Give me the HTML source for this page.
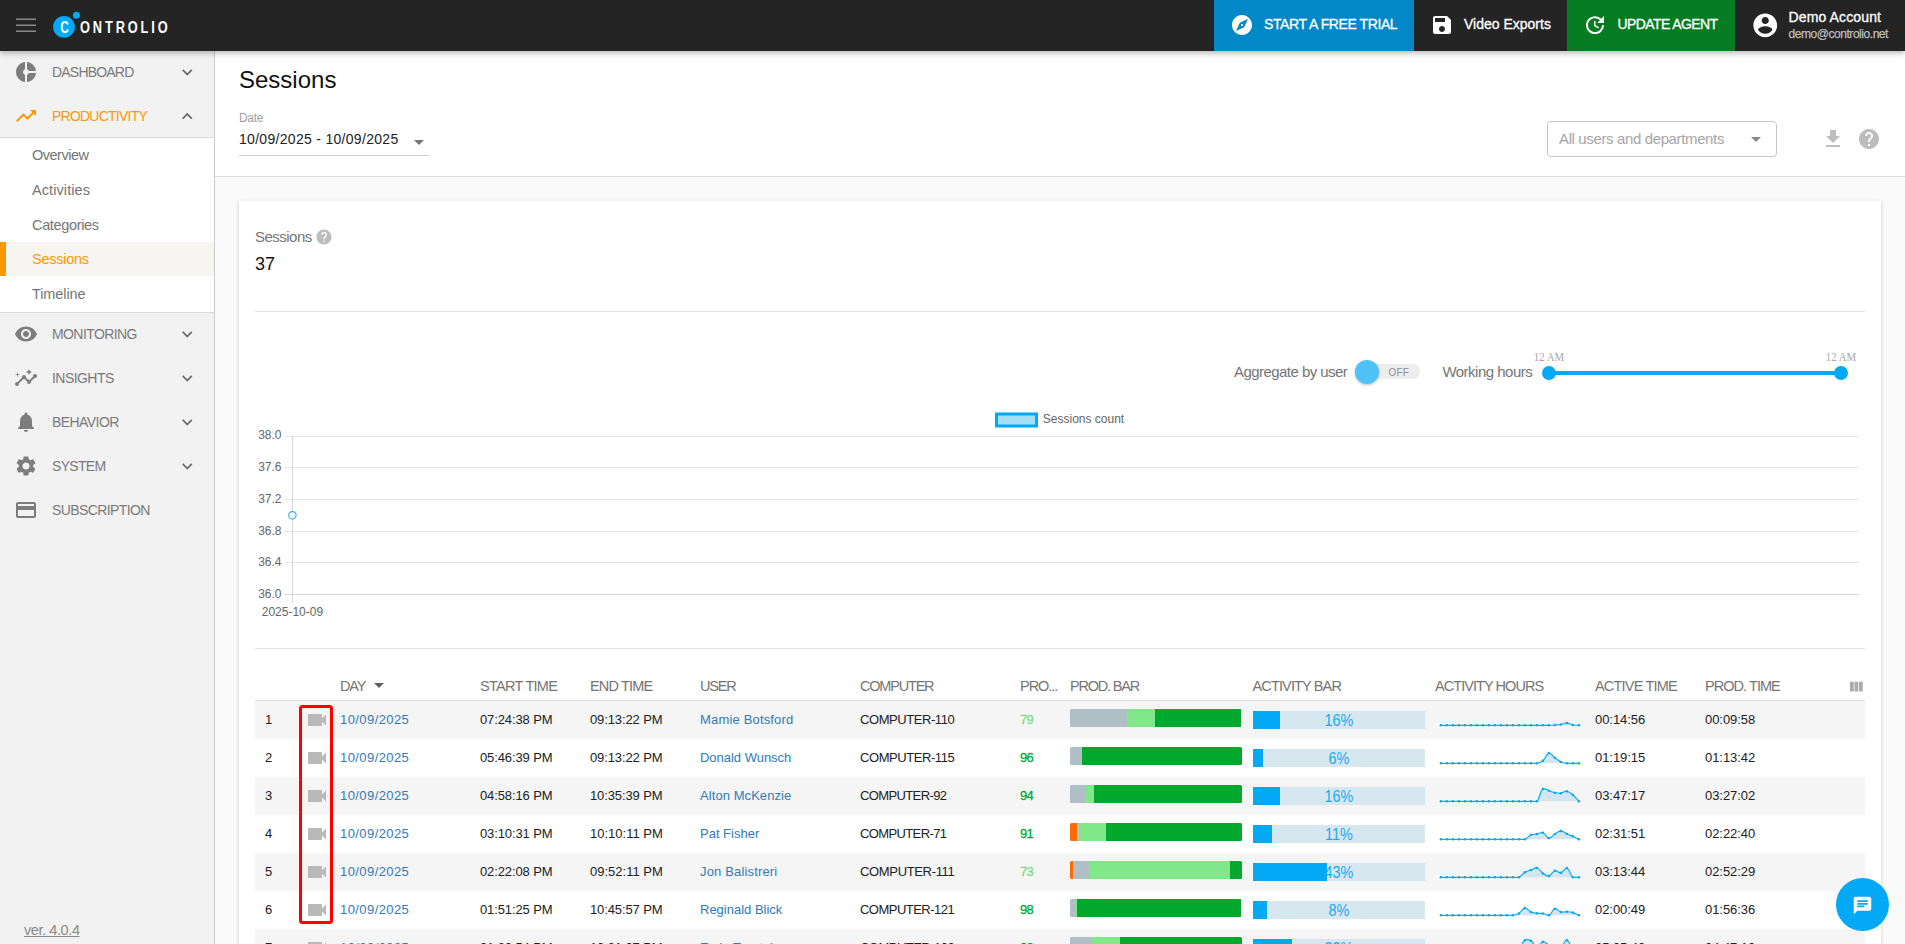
<!DOCTYPE html>
<html lang="en">
<head>
<meta charset="utf-8">
<title>Sessions</title>
<style>
*{box-sizing:border-box;margin:0;padding:0}
html,body{width:1905px;height:944px;overflow:hidden;background:#fafafa;font-family:"Liberation Sans",sans-serif;color:#212121}
svg{display:block}
.abs{position:absolute}
/* header */
#hdr{position:absolute;left:0;top:0;width:1905px;height:51px;background:#242424;z-index:10;box-shadow:0 2px 6px rgba(0,0,0,.3)}
#hdr .t{position:absolute;color:#fff;white-space:nowrap}
/* sidebar */
#side{position:absolute;left:0;top:50px;width:215px;height:894px;background:#f2f2f2;border-right:1px solid #cbcbcb;z-index:5}
.nav{position:absolute;left:0;width:214px;height:44px}
.nav svg.ic{position:absolute;left:14px;top:10px;width:24px;height:24px;fill:#7d7d7d}
.nav svg.ch{position:absolute;left:177.300px;top:11.600px;width:20.500px;height:20.500px;fill:#6b6b6b}
.nav span{position:absolute;left:52px;top:0;line-height:44px;font-size:14px;color:#7a7a7a;white-space:nowrap}
.sub{position:absolute;left:0;top:87px;width:214px;height:176px;background:#fff;border-top:1px solid #dcdcdc;border-bottom:1px solid #dcdcdc}
.sub div{position:absolute;left:0;width:214px;height:35px;line-height:35px;padding-left:32px;font-size:14.5px;color:#757575}
/* main */
#top{position:absolute;left:215px;top:50px;width:1690px;height:127px;background:#fff;border-bottom:1px solid #dcdcdc}
#card{position:absolute;left:239px;top:201px;width:1642px;height:800px;background:#fff;box-shadow:0 1px 4px rgba(0,0,0,.18);border-radius:2px}
.nav.on svg.ic{fill:#ff9800}
.nav.on span{color:#ff9800}
.sub div.cur{background:#f7f5f2;color:#ff9800;border-left:6px solid #ff9800;padding-left:26px}
.th{position:absolute;font-size:14.500px;line-height:20px;color:#757575;white-space:nowrap}
.tr{position:absolute;left:16px;width:1610px;height:38px;background:#fff}
.tr.odd{background:#f5f5f5}
.td{position:absolute;top:0;line-height:37px;font-size:13px;color:#212121;white-space:nowrap}
.td.lk{color:#337ab7}
.td.hi{color:#00a82d}
.td.lo{color:#7fdc86}
.pb{position:absolute;top:8px;width:171.600px;height:17.500px;display:flex;overflow:hidden;border-radius:1.500px}
.pb i{display:block;height:100%;flex:none}
.ab{position:absolute;top:10px;width:172px;height:18px;background:#d7e7ef}
.ab i{position:absolute;left:0;top:0;height:100%;background:#03a9f4}
.ab b{position:absolute;left:0;top:0;width:100%;text-align:center;font-weight:normal;font-size:16px;line-height:19px;color:#22a9ee;transform:scaleX(.9)}
#h1,#h2,#h3,#h4{-webkit-text-stroke:.3px #fff}
#h5{-webkit-text-stroke:.25px #bdbdbd}
.td.hi,.td.lo{-webkit-text-stroke:.3px currentColor}
#n1{letter-spacing:-0.80px}
#n2{letter-spacing:-0.77px}
#n3{letter-spacing:-0.59px}
#n4{letter-spacing:-0.55px}
#n5{letter-spacing:-0.56px}
#n6{letter-spacing:-0.68px}
#n7{letter-spacing:-0.60px}
#s1{letter-spacing:-0.49px}
#s2{letter-spacing:0.09px}
#s3{letter-spacing:-0.34px}
#s4{letter-spacing:-0.26px}
#s5{letter-spacing:-0.10px}
#ver{letter-spacing:-0.41px}
#h1{letter-spacing:-0.41px}
#h3{letter-spacing:-0.60px}
#h4{letter-spacing:0.13px}
#h5{letter-spacing:-0.45px}
#dl{letter-spacing:-0.32px}
#dv{letter-spacing:0.30px}
#sel{letter-spacing:-0.37px}
#c1{letter-spacing:-0.52px}
#c2{letter-spacing:-0.03px}
#c3{letter-spacing:-0.55px}
#c4{letter-spacing:0.20px}
#c5{letter-spacing:-0.51px}
#th0{letter-spacing:-1.20px}
#th1{letter-spacing:-0.72px}
#th2{letter-spacing:-0.83px}
#th3{letter-spacing:-1.20px}
#th4{letter-spacing:-1.20px}
#th5{letter-spacing:-1.04px}
#th6{letter-spacing:-1.20px}
#th7{letter-spacing:-0.86px}
#th8{letter-spacing:-0.94px}
#th9{letter-spacing:-0.81px}
#th10{letter-spacing:-0.95px}
#t1_1{letter-spacing:0.42px}
#t1_2{letter-spacing:-0.11px}
#t1_3{letter-spacing:-0.11px}
#t1_4{letter-spacing:0.17px}
#t1_5{letter-spacing:-0.43px}
#t1_6{letter-spacing:-0.67px}
#t1_7{letter-spacing:-0.06px}
#t1_8{letter-spacing:-0.06px}
#t2_1{letter-spacing:0.42px}
#t2_2{letter-spacing:-0.11px}
#t2_3{letter-spacing:-0.11px}
#t2_4{letter-spacing:-0.02px}
#t2_5{letter-spacing:-0.43px}
#t2_6{letter-spacing:-0.67px}
#t2_7{letter-spacing:-0.06px}
#t2_8{letter-spacing:-0.06px}
#t3_1{letter-spacing:0.42px}
#t3_2{letter-spacing:-0.11px}
#t3_3{letter-spacing:-0.11px}
#t3_4{letter-spacing:0.07px}
#t3_5{letter-spacing:-0.62px}
#t3_6{letter-spacing:-0.67px}
#t3_7{letter-spacing:-0.06px}
#t3_8{letter-spacing:-0.06px}
#t4_1{letter-spacing:0.42px}
#t4_2{letter-spacing:-0.11px}
#t4_5{letter-spacing:-0.62px}
#t4_6{letter-spacing:-0.67px}
#t4_7{letter-spacing:-0.06px}
#t4_8{letter-spacing:-0.06px}
#t5_1{letter-spacing:0.42px}
#t5_2{letter-spacing:-0.11px}
#t5_4{letter-spacing:0.16px}
#t5_5{letter-spacing:-0.34px}
#t5_6{letter-spacing:-0.67px}
#t5_7{letter-spacing:-0.06px}
#t5_8{letter-spacing:-0.06px}
#t6_1{letter-spacing:0.42px}
#t6_2{letter-spacing:-0.11px}
#t6_3{letter-spacing:-0.11px}
#t6_5{letter-spacing:-0.52px}
#t6_6{letter-spacing:-0.67px}
#t6_7{letter-spacing:-0.06px}
#t6_8{letter-spacing:-0.06px}
#t7_1{letter-spacing:0.42px}
#t7_2{letter-spacing:-0.11px}
#t7_3{letter-spacing:-0.11px}
#t7_5{letter-spacing:-0.52px}
#t7_6{letter-spacing:-0.67px}
#t7_7{letter-spacing:-0.06px}
#t7_8{letter-spacing:-0.06px}
</style>
</head>
<body>
<div id="hdr">
<svg class="abs" style="left:14px;top:13px;width:24px;height:24px" viewBox="0 0 24 24"><path fill="#8a8a8a" d="M2 17.5h20V19H2zm0-6h20V13H2zm0-6h20V7H2z"/></svg>
<svg class="abs" style="left:50px;top:8px;width:34px;height:34px" viewBox="0 0 34 34"><circle cx="14" cy="18.900" r="10.900" fill="#03a9f4"/><circle cx="26.400" cy="7.300" r="3.500" fill="#03a9f4"/><text transform="translate(14.400 24.600) scale(.74 1)" text-anchor="middle" font-family="Liberation Sans, sans-serif" font-size="16" font-weight="bold" fill="#fff">C</text></svg>
<div class="t" id="logo" style="left:79.800px;top:17px;font-size:16px;line-height:22px;font-weight:bold;transform:scaleX(.8);transform-origin:0 0;letter-spacing:3.600px">ONTROLIO</div>
<div class="abs" style="left:1214px;top:0;width:200px;height:51px;background:#0288c8"></div>
<svg class="abs" style="left:1230px;top:12.5px;width:24px;height:24px" viewBox="0 0 24 24"><path fill="#fff" d="M12 10.9c-.61 0-1.1.49-1.1 1.1s.49 1.1 1.1 1.1c.61 0 1.1-.49 1.1-1.1s-.49-1.1-1.1-1.1zM12 2C6.48 2 2 6.48 2 12s4.480 10 10 10 10-4.480 10-10S17.52 2 12 2zm2.190 12.190L6 18l3.810-8.190L18 6l-3.810 8.190z"/></svg>
<div class="t" id="h1" style="left:1264px;top:13px;font-size:14px;line-height:22px">START A FREE TRIAL</div>
<svg class="abs" style="left:1430px;top:12.500px;width:24px;height:24px" viewBox="0 0 24 24"><path fill="#fff" d="M17 3H5c-1.110 0-2 .9-2 2v14c0 1.100.890 2 2 2h14c1.100 0 2-.9 2-2V7l-4-4zm-5 16c-1.660 0-3-1.340-3-3s1.340-3 3-3 3 1.340 3 3-1.340 3-3 3zm3-10H5V5h10v4z"/></svg>
<div class="t" id="h2" style="left:1464px;top:13px;font-size:14px;line-height:22px">Video Exports</div>
<div class="abs" style="left:1567px;top:0;width:168px;height:51px;background:#067c22"></div>
<svg class="abs" style="left:1583px;top:12.500px;width:24px;height:24px" viewBox="0 0 24 24"><path fill="#fff" d="M21 10.120h-6.780l2.740-2.820c-2.730-2.700-7.150-2.800-9.880-.1-2.730 2.710-2.730 7.080 0 9.790s7.150 2.710 9.880 0C18.320 15.650 19 14.080 19 12.100h2c0 1.980-.88 4.550-2.640 6.290-3.510 3.480-9.210 3.480-12.720 0-3.500-3.470-3.530-9.110-.02-12.580s9.140-3.470 12.650 0L21 3v7.120zM12.500 8v4.250l3.500 2.080-.72 1.210L11 13V8h1.500z"/></svg>
<div class="t" id="h3" style="left:1617.500px;top:13px;font-size:14px;line-height:22px">UPDATE AGENT</div>
<svg class="abs" style="left:1750.500px;top:10.500px;width:28.500px;height:28.500px" viewBox="0 0 24 24"><path fill="#fff" d="M12 2C6.480 2 2 6.480 2 12s4.480 10 10 10 10-4.480 10-10S17.520 2 12 2zm0 3c1.660 0 3 1.340 3 3s-1.340 3-3 3-3-1.340-3-3 1.340-3 3-3zm0 14.200c-2.500 0-4.710-1.280-6-3.220.03-1.990 4-3.080 6-3.080 1.990 0 5.970 1.090 6 3.080-1.290 1.940-3.500 3.220-6 3.220z"/></svg>
<div class="t" id="h4" style="left:1788.500px;top:7px;font-size:14px;line-height:20px">Demo Account</div>
<div class="t" id="h5" style="left:1788.500px;top:24.500px;font-size:12px;line-height:18px;color:#bdbdbd">demo@controlio.net</div>
</div>
<div id="side">
<div class="nav " style="top:0px"><svg class="ic" viewBox="0 0 24 24"><path d="M11 9.16V2c-5 .5-9 4.79-9 10s4 9.5 9 10v-7.16c-1-.41-2-1.52-2-2.84s1-2.430 2-2.840zM14.860 11H22c-.48-4.75-4-8.53-9-9v7.160c1 .3 1.520.980 1.860 1.840zM13 14.840V22c5-.47 8.520-4.250 9-9h-7.140c-.34.860-.86 1.540-1.860 1.840z"/></svg><span id="n1">DASHBOARD</span><svg class="ch" viewBox="0 0 24 24"><path d="M16.590 8.590L12 13.170 7.410 8.590 6 10l6 6 6-6z"/></svg></div>
<div class="nav on" style="top:44px"><svg class="ic" viewBox="0 0 24 24"><path d="M16 6l2.290 2.290-4.880 4.880-4-4L2 16.590 3.410 18l6-6 4 4 6.300-6.290L22 12V6z"/></svg><span id="n2">PRODUCTIVITY</span><svg class="ch" viewBox="0 0 24 24"><path d="M12 8l-6 6 1.410 1.410L12 10.830l4.590 4.580L18 14z"/></svg></div>
<div class="sub">
<div style="top:-.3px"><span id="s1">Overview</span></div>
<div style="top:34.500px"><span id="s2">Activities</span></div>
<div style="top:69.500px"><span id="s3">Categories</span></div>
<div class="cur" style="top:104px;height:33.700px;line-height:35.400px"><span id="s4">Sessions</span></div>
<div style="top:138.800px"><span id="s5">Timeline</span></div>
</div>
<div class="nav " style="top:262px"><svg class="ic" viewBox="0 0 24 24"><path d="M12 4.500C7 4.500 2.730 7.610 1 12c1.730 4.390 6 7.500 11 7.500s9.270-3.110 11-7.500c-1.730-4.390-6-7.500-11-7.500zM12 17c-2.760 0-5-2.240-5-5s2.240-5 5-5 5 2.240 5 5-2.240 5-5 5zm0-8c-1.660 0-3 1.340-3 3s1.340 3 3 3 3-1.340 3-3-1.340-3-3-3z"/></svg><span id="n3">MONITORING</span><svg class="ch" viewBox="0 0 24 24"><path d="M16.590 8.590L12 13.170 7.410 8.590 6 10l6 6 6-6z"/></svg></div>
<div class="nav " style="top:306px"><svg class="ic" viewBox="0 0 24 24"><path d="M21 8c-1.450 0-2.260 1.440-1.930 2.510l-3.550 3.560c-.3-.09-.74-.09-1.040 0l-2.550-2.550C12.270 10.450 11.460 9 10 9c-1.450 0-2.270 1.440-1.930 2.520l-4.560 4.550C2.440 15.740 1 16.550 1 18c0 1.100.9 2 2 2 1.450 0 2.260-1.440 1.930-2.510l4.550-4.560c.3.090.74.090 1.040 0l2.550 2.550C12.730 16.550 13.540 18 15 18c1.450 0 2.270-1.440 1.930-2.520l3.560-3.550c1.070.33 2.510-.48 2.510-1.930 0-1.100-.9-2-2-2z M15 9l.94-2.070L18 6l-2.060-.93L15 3l-.92 2.070L12 6l2.080.93z M3.500 11L4 9l2-.5L4 8l-.5-2L3 8l-2 .5L3 9z"/></svg><span id="n4">INSIGHTS</span><svg class="ch" viewBox="0 0 24 24"><path d="M16.590 8.590L12 13.170 7.410 8.590 6 10l6 6 6-6z"/></svg></div>
<div class="nav " style="top:350px"><svg class="ic" viewBox="0 0 24 24"><path d="M12 22c1.100 0 2-.9 2-2h-4c0 1.100.890 2 2 2zm6-6v-5c0-3.070-1.640-5.640-4.500-6.320V4c0-.83-.67-1.500-1.500-1.500s-1.500.67-1.500 1.500v.68C7.630 5.360 6 7.920 6 11v5l-2 2v1h16v-1l-2-2z"/></svg><span id="n5">BEHAVIOR</span><svg class="ch" viewBox="0 0 24 24"><path d="M16.590 8.590L12 13.170 7.410 8.590 6 10l6 6 6-6z"/></svg></div>
<div class="nav " style="top:394px"><svg class="ic" viewBox="0 0 24 24"><path d="M19.140 12.940c.04-.3.060-.61.060-.94 0-.32-.02-.64-.07-.94l2.030-1.580c.18-.14.23-.41.12-.61l-1.920-3.320c-.12-.22-.37-.29-.59-.22l-2.390.96c-.5-.38-1.030-.7-1.620-.94l-.36-2.540c-.04-.24-.24-.41-.48-.41h-3.840c-.24 0-.43.17-.47.41l-.36 2.540c-.59.24-1.130.57-1.620.94l-2.390-.96c-.22-.08-.47 0-.59.22L2.740 8.870c-.12.21-.08.47.12.61l2.030 1.580c-.05.3-.09.63-.09.94s.02.64.07.94l-2.030 1.580c-.18.14-.23.41-.12.61l1.920 3.320c.12.22.37.29.59.22l2.390-.96c.5.38 1.030.7 1.620.94l.36 2.540c.05.24.24.41.48.41h3.840c.24 0 .44-.17.47-.41l.36-2.540c.59-.24 1.130-.56 1.620-.94l2.390.96c.22.08.47 0 .59-.22l1.920-3.320c.12-.22.07-.47-.12-.61l-2.010-1.580zM12 15.600c-1.980 0-3.600-1.620-3.600-3.600s1.620-3.600 3.600-3.600 3.600 1.620 3.600 3.600-1.620 3.600-3.600 3.600z"/></svg><span id="n6">SYSTEM</span><svg class="ch" viewBox="0 0 24 24"><path d="M16.590 8.590L12 13.170 7.410 8.590 6 10l6 6 6-6z"/></svg></div>
<div class="nav " style="top:438px"><svg class="ic" viewBox="0 0 24 24"><path d="M20 4H4c-1.110 0-1.990.890-1.990 2L2 18c0 1.110.890 2 2 2h16c1.110 0 2-.89 2-2V6c0-1.110-.89-2-2-2zm0 14H4v-6h16v6zm0-10H4V6h16v2z"/></svg><span id="n7">SUBSCRIPTION</span></div>
<div class="abs" id="ver" style="left:24px;top:870px;font-size:14.500px;line-height:20px;color:#8a8a8a;text-decoration:underline">ver. 4.0.4</div>
</div>
<div id="top">
<div class="abs" id="ttl" style="left:24px;top:14px;font-size:24px;line-height:32px;color:#111">Sessions</div>
<div class="abs" id="dl" style="left:24px;top:60px;font-size:12px;line-height:16px;color:#9e9e9e">Date</div>
<div class="abs" id="dv" style="left:24px;top:79px;font-size:14px;line-height:20px;color:#212121;white-space:nowrap">10/09/2025 - 10/09/2025</div>
<svg class="abs" style="left:192px;top:80px;width:24px;height:24px" viewBox="0 0 24 24"><path fill="#757575" d="M7 10l5 5 5-5z"/></svg>
<div class="abs" style="left:24px;top:105px;width:190px;height:1px;background:#cfcfcf"></div>
<div class="abs" style="left:1332px;top:71px;width:230px;height:36px;border:1px solid #c8c8c8;border-radius:4px;background:#fff"></div>
<div class="abs" id="sel" style="left:1344px;top:79px;font-size:15px;line-height:20px;color:#a6a6a6;white-space:nowrap">All users and departments</div>
<svg class="abs" style="left:1529px;top:77px;width:24px;height:24px" viewBox="0 0 24 24"><path fill="#878787" d="M7 10l5 5 5-5z"/></svg>
<svg class="abs" style="left:1606px;top:77px;width:24px;height:24px" viewBox="0 0 24 24"><path fill="#bdbdbd" d="M19 9h-4V3H9v6H5l7 7 7-7zM5 18v2h14v-2H5z"/></svg>
<svg class="abs" style="left:1642px;top:77px;width:24px;height:24px" viewBox="0 0 24 24"><path fill="#bdbdbd" d="M12 2C6.480 2 2 6.480 2 12s4.480 10 10 10 10-4.480 10-10S17.520 2 12 2zm1 17h-2v-2h2v2zm2.070-7.750l-.9.920C13.450 12.900 13 13.500 13 15h-2v-.5c0-1.100.450-2.100 1.170-2.830l1.240-1.260c.370-.36.590-.86.590-1.410 0-1.100-.9-2-2-2s-2 .9-2 2H8c0-2.210 1.790-4 4-4s4 1.790 4 4c0 .880-.36 1.680-.93 2.250z"/></svg>
</div>
<div id="card">
<div class="abs" id="c1" style="left:16px;top:26px;font-size:15px;line-height:20px;color:#757575">Sessions</div>
<svg class="abs" style="left:76px;top:27px;width:18px;height:18px" viewBox="0 0 24 24"><path fill="#bdbdbd" d="M12 2C6.480 2 2 6.480 2 12s4.480 10 10 10 10-4.480 10-10S17.520 2 12 2zm1 17h-2v-2h2v2zm2.070-7.750l-.9.920C13.450 12.900 13 13.500 13 15h-2v-.5c0-1.100.450-2.100 1.170-2.830l1.240-1.260c.370-.36.590-.86.590-1.410 0-1.100-.9-2-2-2s-2 .9-2 2H8c0-2.210 1.790-4 4-4s4 1.790 4 4c0 .880-.36 1.680-.93 2.250z"/></svg>
<div class="abs" id="c2" style="left:16px;top:50.5px;font-size:18px;line-height:24px;color:#111">37</div>
<div class="abs" style="left:16px;top:110px;width:1610px;height:1px;background:#e0e0e0"></div>
<div class="abs" id="c3" style="left:995px;top:161px;font-size:15px;line-height:20px;color:#757575;white-space:nowrap">Aggregate by user</div>
<div class="abs" style="left:1123px;top:163px;width:58px;height:15px;border-radius:7.500px;background:#ededed"></div>
<div class="abs" id="c4" style="left:1149.500px;top:165px;font-size:10px;line-height:14px;color:#8f8f8f">OFF</div>
<div class="abs" style="left:1115.8px;top:158.7px;width:24.400px;height:24.400px;border-radius:50%;background:#4fc3f7;box-shadow:0 1px 3px rgba(0,0,0,.25)"></div>
<div class="abs" id="c5" style="left:1203.4px;top:161px;font-size:15px;line-height:20px;color:#757575;white-space:nowrap">Working hours</div>
<div class="abs" style="left:1310px;top:170.200px;width:292px;height:3.500px;background:#03a9f4"></div>
<div class="abs" style="left:1303px;top:165px;width:14px;height:14px;border-radius:50%;background:#03a9f4"></div>
<div class="abs" style="left:1595px;top:165px;width:14px;height:14px;border-radius:50%;background:#03a9f4"></div>
<div class="abs" id="c6" style="left:1290px;top:148.500px;width:40px;text-align:center;font-family:'Liberation Serif',serif;font-size:12px;transform:scaleX(.9);line-height:14px;color:#a8a8a8;white-space:nowrap">12 AM</div>
<div class="abs" id="c7" style="left:1582px;top:148.500px;width:40px;text-align:center;font-family:'Liberation Serif',serif;font-size:12px;transform:scaleX(.9);line-height:14px;color:#a8a8a8;white-space:nowrap">12 AM</div>
<svg class="abs" style="left:16px;top:204px;width:1610px;height:220px" viewBox="0 0 1610 220" font-family="Liberation Sans, sans-serif" font-size="12" fill="#666">
<rect x="741.5" y="9.0" width="40" height="12" fill="#a4dffa" stroke="#03a9f4" stroke-width="3"/>
<text id="lg" x="787.8" y="18.2">Sessions count</text>
<path d="M29.5 31.5H1604" stroke="#e4e4e4" stroke-width="1" fill="none"/>
<text x="26.5" y="34.300" text-anchor="end">38.0</text>
<path d="M29.5 62.5H1604" stroke="#e4e4e4" stroke-width="1" fill="none"/>
<text x="26.5" y="66.1" text-anchor="end">37.6</text>
<path d="M29.5 94.5H1604" stroke="#e4e4e4" stroke-width="1" fill="none"/>
<text x="26.5" y="98.1" text-anchor="end">37.2</text>
<path d="M29.5 126.5H1604" stroke="#e4e4e4" stroke-width="1" fill="none"/>
<text x="26.5" y="130.1" text-anchor="end">36.8</text>
<path d="M29.5 157.5H1604" stroke="#e4e4e4" stroke-width="1" fill="none"/>
<text x="26.5" y="161.1" text-anchor="end">36.4</text>
<path d="M29.5 189.5H1604" stroke="#e4e4e4" stroke-width="1" fill="none"/>
<text x="26.5" y="193.1" text-anchor="end">36.0</text>
<path d="M37.5 31V197.5" stroke="#d6d6d6" stroke-width="1" fill="none"/>
<path d="M29.5 189.5H1604" stroke="#d6d6d6" stroke-width="1" fill="none"/>
<circle cx="37.4" cy="110.3" r="3.700" fill="#fff" stroke="#29abf0" stroke-width="1.100"/>
<text x="37.4" y="211" text-anchor="middle">2025-10-09</text>
</svg>
<div class="abs" style="left:16px;top:447px;width:1610px;height:1px;background:#e0e0e0"></div>
<div class="th" id="th0" style="left:101px;top:475px">DAY</div>
<div class="th" id="th1" style="left:241px;top:475px">START TIME</div>
<div class="th" id="th2" style="left:351px;top:475px">END TIME</div>
<div class="th" id="th3" style="left:461px;top:475px">USER</div>
<div class="th" id="th4" style="left:621px;top:475px">COMPUTER</div>
<div class="th" id="th5" style="left:781px;top:475px">PRO...</div>
<div class="th" id="th6" style="left:831px;top:475px">PROD. BAR</div>
<div class="th" id="th7" style="left:1013.5px;top:475px">ACTIVITY BAR</div>
<div class="th" id="th8" style="left:1196px;top:475px">ACTIVITY HOURS</div>
<div class="th" id="th9" style="left:1356px;top:475px">ACTIVE TIME</div>
<div class="th" id="th10" style="left:1466px;top:475px">PROD. TIME</div>
<svg class="abs" style="left:127.5px;top:472px;width:24px;height:24px" viewBox="0 0 24 24"><path fill="#616161" d="M7 10l5 5 5-5z"/></svg>
<svg class="abs" style="left:1607.500px;top:476.500px;width:18px;height:18px" viewBox="0 0 24 24"><path fill="#ababab" d="M10 18h5V5h-5v13zm-6 0h5V5H4v13zM16 5v13h5V5h-5z"/></svg>
<div class="abs" style="left:16px;top:499px;width:1610px;height:1px;background:#e0e0e0"></div>
<div class="tr odd" style="top:500px"><span id="t1_0" class="td" style="left:10px">1</span><svg class="abs" style="left:50.2px;top:7px;width:24px;height:24px" viewBox="0 0 24 24"><path fill="#b9b9b9" d="M17 10.500V7c0-.55-.45-1-1-1H4c-.55 0-1 .45-1 1v10c0 .55.45 1 1 1h12c.55 0 1-.45 1-1v-3.500l4 4v-11l-4 4z"/></svg><span id="t1_1" class="td lk" style="left:85px">10/09/2025</span><span id="t1_2" class="td" style="left:225px">07:24:38 PM</span><span id="t1_3" class="td" style="left:335px">09:13:22 PM</span><span id="t1_4" class="td lk" style="left:445px">Mamie Botsford</span><span id="t1_5" class="td" style="left:605px">COMPUTER-110</span><span id="t1_6" class="td lo" style="left:765px">79</span><span class="pb" style="left:815px"><i style="width:33.2%;background:#b0bec5"></i><i style="width:16.2%;background:#80e888"></i><i style="width:50.2%;background:#00a82d"></i></span><span class="ab" style="left:997.8px"><i style="width:16%"></i><b>16%</b></span><svg class="abs sp" style="left:1180px;top:0;width:155px;height:38px" viewBox="0 0 155 38"><path d="M5.9 24.3L11.9 24.3L17.9 24.3L23.9 24.3L29.9 24.3L35.9 24.3L41.9 24.3L47.9 24.3L53.9 24.3L59.9 24.3L65.9 24.3L71.9 24.3L77.9 24.3L83.9 24.3L89.9 24.3L95.9 24.3L101.9 24.3L107.9 24.3L113.9 24.3C116.3 24.24 117.5 24.16 119.9 24C122.3 23.84 123.53 23.89 125.9 23.5C128.33 23.09 129.53 21.9 131.9 22C134.33 22.1 135.44 23.53 137.9 24C140.24 24.3 141.5 24.18 143.9 24.3L143.9 24.3L5.9 24.3Z" fill="#d3e6ef" stroke="none"/><path d="M5.9 24.3L11.9 24.3L17.9 24.3L23.9 24.3L29.9 24.3L35.9 24.3L41.9 24.3L47.9 24.3L53.9 24.3L59.9 24.3L65.9 24.3L71.9 24.3L77.9 24.3L83.9 24.3L89.9 24.3L95.9 24.3L101.9 24.3L107.9 24.3L113.9 24.3C116.3 24.24 117.5 24.16 119.9 24C122.3 23.84 123.53 23.89 125.9 23.5C128.33 23.09 129.53 21.9 131.9 22C134.33 22.1 135.44 23.53 137.9 24C140.24 24.3 141.5 24.18 143.9 24.3" fill="none" stroke="#0ca8f3" stroke-width="1.150"/><g fill="#03a9f4"><circle cx="5.9" cy="24.3" r="1.250"/><circle cx="11.9" cy="24.3" r="1.250"/><circle cx="17.9" cy="24.3" r="1.250"/><circle cx="23.9" cy="24.3" r="1.250"/><circle cx="29.9" cy="24.3" r="1.250"/><circle cx="35.9" cy="24.3" r="1.250"/><circle cx="41.9" cy="24.3" r="1.250"/><circle cx="47.9" cy="24.3" r="1.250"/><circle cx="53.9" cy="24.3" r="1.250"/><circle cx="59.9" cy="24.3" r="1.250"/><circle cx="65.9" cy="24.3" r="1.250"/><circle cx="71.9" cy="24.3" r="1.250"/><circle cx="77.9" cy="24.3" r="1.250"/><circle cx="83.9" cy="24.3" r="1.250"/><circle cx="89.9" cy="24.3" r="1.250"/><circle cx="95.9" cy="24.3" r="1.250"/><circle cx="101.9" cy="24.3" r="1.250"/><circle cx="107.9" cy="24.3" r="1.250"/><circle cx="113.9" cy="24.3" r="1.250"/><circle cx="119.9" cy="24" r="1.250"/><circle cx="125.9" cy="23.5" r="1.250"/><circle cx="131.9" cy="22" r="1.250"/><circle cx="137.9" cy="24" r="1.250"/><circle cx="143.9" cy="24.3" r="1.250"/></g></svg><span id="t1_7" class="td" style="left:1340px">00:14:56</span><span id="t1_8" class="td" style="left:1450px">00:09:58</span></div>
<div class="tr" style="top:538px"><span id="t2_0" class="td" style="left:10px">2</span><svg class="abs" style="left:50.2px;top:7px;width:24px;height:24px" viewBox="0 0 24 24"><path fill="#b9b9b9" d="M17 10.500V7c0-.55-.45-1-1-1H4c-.55 0-1 .45-1 1v10c0 .55.45 1 1 1h12c.55 0 1-.45 1-1v-3.500l4 4v-11l-4 4z"/></svg><span id="t2_1" class="td lk" style="left:85px">10/09/2025</span><span id="t2_2" class="td" style="left:225px">05:46:39 PM</span><span id="t2_3" class="td" style="left:335px">09:13:22 PM</span><span id="t2_4" class="td lk" style="left:445px">Donald Wunsch</span><span id="t2_5" class="td" style="left:605px">COMPUTER-115</span><span id="t2_6" class="td hi" style="left:765px">96</span><span class="pb" style="left:815px"><i style="width:6.8%;background:#b0bec5"></i><i style="width:93.2%;background:#00a82d"></i></span><span class="ab" style="left:997.8px"><i style="width:6%"></i><b>6%</b></span><svg class="abs sp" style="left:1180px;top:0;width:155px;height:38px" viewBox="0 0 155 38"><path d="M5.9 24.3L11.9 24.3L17.9 24.3L23.9 24.3L29.9 24.3L35.9 24.3L41.9 24.3L47.9 24.3L53.9 24.3L59.9 24.3L65.9 24.3L71.9 24.3L77.9 24.3L83.9 24.3L89.9 24.3L95.9 24.3L101.9 24.3C104.4 23.78 105.98 23.43 107.9 21.8C110.78 19.35 111.2 14.77 113.9 14.1C116 13.57 117.45 16.98 119.9 18.8C122.25 20.54 123.29 21.8 125.9 23C128.09 24 129.47 24.04 131.9 24.3L137.9 24.3L143.9 24.3L143.9 24.3L5.9 24.3Z" fill="#d3e6ef" stroke="none"/><path d="M5.9 24.3L11.9 24.3L17.9 24.3L23.9 24.3L29.9 24.3L35.9 24.3L41.9 24.3L47.9 24.3L53.9 24.3L59.9 24.3L65.9 24.3L71.9 24.3L77.9 24.3L83.9 24.3L89.9 24.3L95.9 24.3L101.9 24.3C104.4 23.78 105.98 23.43 107.9 21.8C110.78 19.35 111.2 14.77 113.9 14.1C116 13.57 117.45 16.98 119.9 18.8C122.25 20.54 123.29 21.8 125.9 23C128.09 24 129.47 24.04 131.9 24.3L137.9 24.3L143.9 24.3" fill="none" stroke="#0ca8f3" stroke-width="1.150"/><g fill="#03a9f4"><circle cx="5.9" cy="24.3" r="1.250"/><circle cx="11.9" cy="24.3" r="1.250"/><circle cx="17.9" cy="24.3" r="1.250"/><circle cx="23.9" cy="24.3" r="1.250"/><circle cx="29.9" cy="24.3" r="1.250"/><circle cx="35.9" cy="24.3" r="1.250"/><circle cx="41.9" cy="24.3" r="1.250"/><circle cx="47.9" cy="24.3" r="1.250"/><circle cx="53.9" cy="24.3" r="1.250"/><circle cx="59.9" cy="24.3" r="1.250"/><circle cx="65.9" cy="24.3" r="1.250"/><circle cx="71.9" cy="24.3" r="1.250"/><circle cx="77.9" cy="24.3" r="1.250"/><circle cx="83.9" cy="24.3" r="1.250"/><circle cx="89.9" cy="24.3" r="1.250"/><circle cx="95.9" cy="24.3" r="1.250"/><circle cx="101.9" cy="24.3" r="1.250"/><circle cx="107.9" cy="21.8" r="1.250"/><circle cx="113.9" cy="14.1" r="1.250"/><circle cx="119.9" cy="18.8" r="1.250"/><circle cx="125.9" cy="23" r="1.250"/><circle cx="131.9" cy="24.3" r="1.250"/><circle cx="137.9" cy="24.3" r="1.250"/><circle cx="143.9" cy="24.3" r="1.250"/></g></svg><span id="t2_7" class="td" style="left:1340px">01:19:15</span><span id="t2_8" class="td" style="left:1450px">01:13:42</span></div>
<div class="tr odd" style="top:576px"><span id="t3_0" class="td" style="left:10px">3</span><svg class="abs" style="left:50.2px;top:7px;width:24px;height:24px" viewBox="0 0 24 24"><path fill="#b9b9b9" d="M17 10.500V7c0-.55-.45-1-1-1H4c-.55 0-1 .45-1 1v10c0 .55.45 1 1 1h12c.55 0 1-.45 1-1v-3.500l4 4v-11l-4 4z"/></svg><span id="t3_1" class="td lk" style="left:85px">10/09/2025</span><span id="t3_2" class="td" style="left:225px">04:58:16 PM</span><span id="t3_3" class="td" style="left:335px">10:35:39 PM</span><span id="t3_4" class="td lk" style="left:445px">Alton McKenzie</span><span id="t3_5" class="td" style="left:605px">COMPUTER-92</span><span id="t3_6" class="td hi" style="left:765px">94</span><span class="pb" style="left:815px"><i style="width:9.4%;background:#b0bec5"></i><i style="width:4.5%;background:#80e888"></i><i style="width:86.1%;background:#00a82d"></i></span><span class="ab" style="left:997.8px"><i style="width:16%"></i><b>16%</b></span><svg class="abs sp" style="left:1180px;top:0;width:155px;height:38px" viewBox="0 0 155 38"><path d="M5.9 24.3L11.9 24.3L17.9 24.3L23.9 24.3L29.9 24.3L35.9 24.3L41.9 24.3L47.9 24.3L53.9 24.3L59.9 24.3L65.9 24.3L71.9 24.3L77.9 24.3L83.9 24.3L89.9 24.3L95.9 24.3L101.9 24.3C105.24 20.84 104.61 14.78 107.9 11.9C109.41 10.58 111.5 13.04 113.9 13.8C116.3 14.56 117.45 15.21 119.9 15.7C122.25 16.17 123.56 16.49 125.9 16.2C128.36 15.89 129.64 13.86 131.9 14.2C134.44 14.58 135.74 16.18 137.9 18C140.54 20.22 141.5 21.78 143.9 24.3L143.9 24.3L5.9 24.3Z" fill="#d3e6ef" stroke="none"/><path d="M5.9 24.3L11.9 24.3L17.9 24.3L23.9 24.3L29.9 24.3L35.9 24.3L41.9 24.3L47.9 24.3L53.9 24.3L59.9 24.3L65.9 24.3L71.9 24.3L77.9 24.3L83.9 24.3L89.9 24.3L95.9 24.3L101.9 24.3C105.24 20.84 104.61 14.78 107.9 11.9C109.41 10.58 111.5 13.04 113.9 13.8C116.3 14.56 117.45 15.21 119.9 15.7C122.25 16.17 123.56 16.49 125.9 16.2C128.36 15.89 129.64 13.86 131.9 14.2C134.44 14.58 135.74 16.18 137.9 18C140.54 20.22 141.5 21.78 143.9 24.3" fill="none" stroke="#0ca8f3" stroke-width="1.150"/><g fill="#03a9f4"><circle cx="5.9" cy="24.3" r="1.250"/><circle cx="11.9" cy="24.3" r="1.250"/><circle cx="17.9" cy="24.3" r="1.250"/><circle cx="23.9" cy="24.3" r="1.250"/><circle cx="29.9" cy="24.3" r="1.250"/><circle cx="35.9" cy="24.3" r="1.250"/><circle cx="41.9" cy="24.3" r="1.250"/><circle cx="47.9" cy="24.3" r="1.250"/><circle cx="53.9" cy="24.3" r="1.250"/><circle cx="59.9" cy="24.3" r="1.250"/><circle cx="65.9" cy="24.3" r="1.250"/><circle cx="71.9" cy="24.3" r="1.250"/><circle cx="77.9" cy="24.3" r="1.250"/><circle cx="83.9" cy="24.3" r="1.250"/><circle cx="89.9" cy="24.3" r="1.250"/><circle cx="95.9" cy="24.3" r="1.250"/><circle cx="101.9" cy="24.3" r="1.250"/><circle cx="107.9" cy="11.9" r="1.250"/><circle cx="113.9" cy="13.8" r="1.250"/><circle cx="119.9" cy="15.7" r="1.250"/><circle cx="125.9" cy="16.2" r="1.250"/><circle cx="131.9" cy="14.2" r="1.250"/><circle cx="137.9" cy="18" r="1.250"/><circle cx="143.9" cy="24.3" r="1.250"/></g></svg><span id="t3_7" class="td" style="left:1340px">03:47:17</span><span id="t3_8" class="td" style="left:1450px">03:27:02</span></div>
<div class="tr" style="top:614px"><span id="t4_0" class="td" style="left:10px">4</span><svg class="abs" style="left:50.2px;top:7px;width:24px;height:24px" viewBox="0 0 24 24"><path fill="#b9b9b9" d="M17 10.500V7c0-.55-.45-1-1-1H4c-.55 0-1 .45-1 1v10c0 .55.45 1 1 1h12c.55 0 1-.45 1-1v-3.500l4 4v-11l-4 4z"/></svg><span id="t4_1" class="td lk" style="left:85px">10/09/2025</span><span id="t4_2" class="td" style="left:225px">03:10:31 PM</span><span id="t4_3" class="td" style="left:335px">10:10:11 PM</span><span id="t4_4" class="td lk" style="left:445px">Pat Fisher</span><span id="t4_5" class="td" style="left:605px">COMPUTER-71</span><span id="t4_6" class="td hi" style="left:765px">91</span><span class="pb" style="left:815px"><i style="width:4.200%;background:#ff6d00"></i><i style="width:1.600%;background:#b0bec5"></i><i style="width:15.200%;background:#80e888"></i><i style="width:79%;background:#00a82d"></i></span><span class="ab" style="left:997.8px"><i style="width:11%"></i><b>11%</b></span><svg class="abs sp" style="left:1180px;top:0;width:155px;height:38px" viewBox="0 0 155 38"><path d="M5.9 24.3L11.9 24.3L17.9 24.3L23.9 24.3L29.9 24.3L35.9 24.3L41.9 24.3L47.9 24.3L53.9 24.3L59.9 24.3L65.9 24.3L71.9 24.3L77.9 24.3L83.9 24.3L89.9 24.3C92.54 23.38 93.28 21.28 95.9 20.1C98.08 19.12 99.5 19.38 101.9 18.9C104.3 18.42 105.83 16.98 107.9 17.7C110.63 18.66 111.38 22.85 113.9 23.1C116.18 23.33 117.39 20.4 119.9 18.9C122.19 17.52 123.5 15.9 125.9 15.9C128.3 15.9 129.46 17.8 131.9 18.9C134.26 19.96 135.54 20.24 137.9 21.3C140.34 22.4 141.5 23.1 143.9 24.3L143.9 24.3L5.9 24.3Z" fill="#d3e6ef" stroke="none"/><path d="M5.9 24.3L11.9 24.3L17.9 24.3L23.9 24.3L29.9 24.3L35.9 24.3L41.9 24.3L47.9 24.3L53.9 24.3L59.9 24.3L65.9 24.3L71.9 24.3L77.9 24.3L83.9 24.3L89.9 24.3C92.54 23.38 93.28 21.28 95.9 20.1C98.08 19.12 99.5 19.38 101.9 18.9C104.3 18.42 105.83 16.98 107.9 17.7C110.63 18.66 111.38 22.85 113.9 23.1C116.18 23.33 117.39 20.4 119.9 18.9C122.19 17.52 123.5 15.9 125.9 15.9C128.3 15.9 129.46 17.8 131.9 18.9C134.26 19.96 135.54 20.24 137.9 21.3C140.34 22.4 141.5 23.1 143.9 24.3" fill="none" stroke="#0ca8f3" stroke-width="1.150"/><g fill="#03a9f4"><circle cx="5.9" cy="24.3" r="1.250"/><circle cx="11.9" cy="24.3" r="1.250"/><circle cx="17.9" cy="24.3" r="1.250"/><circle cx="23.9" cy="24.3" r="1.250"/><circle cx="29.9" cy="24.3" r="1.250"/><circle cx="35.9" cy="24.3" r="1.250"/><circle cx="41.9" cy="24.3" r="1.250"/><circle cx="47.9" cy="24.3" r="1.250"/><circle cx="53.9" cy="24.3" r="1.250"/><circle cx="59.9" cy="24.3" r="1.250"/><circle cx="65.9" cy="24.3" r="1.250"/><circle cx="71.9" cy="24.3" r="1.250"/><circle cx="77.9" cy="24.3" r="1.250"/><circle cx="83.9" cy="24.3" r="1.250"/><circle cx="89.9" cy="24.3" r="1.250"/><circle cx="95.9" cy="20.1" r="1.250"/><circle cx="101.9" cy="18.9" r="1.250"/><circle cx="107.9" cy="17.7" r="1.250"/><circle cx="113.9" cy="23.1" r="1.250"/><circle cx="119.9" cy="18.9" r="1.250"/><circle cx="125.9" cy="15.9" r="1.250"/><circle cx="131.9" cy="18.9" r="1.250"/><circle cx="137.9" cy="21.3" r="1.250"/><circle cx="143.9" cy="24.3" r="1.250"/></g></svg><span id="t4_7" class="td" style="left:1340px">02:31:51</span><span id="t4_8" class="td" style="left:1450px">02:22:40</span></div>
<div class="tr odd" style="top:652px"><span id="t5_0" class="td" style="left:10px">5</span><svg class="abs" style="left:50.2px;top:7px;width:24px;height:24px" viewBox="0 0 24 24"><path fill="#b9b9b9" d="M17 10.500V7c0-.55-.45-1-1-1H4c-.55 0-1 .45-1 1v10c0 .55.45 1 1 1h12c.55 0 1-.45 1-1v-3.500l4 4v-11l-4 4z"/></svg><span id="t5_1" class="td lk" style="left:85px">10/09/2025</span><span id="t5_2" class="td" style="left:225px">02:22:08 PM</span><span id="t5_3" class="td" style="left:335px">09:52:11 PM</span><span id="t5_4" class="td lk" style="left:445px">Jon Balistreri</span><span id="t5_5" class="td" style="left:605px">COMPUTER-111</span><span id="t5_6" class="td lo" style="left:765px">73</span><span class="pb" style="left:815px"><i style="width:1.8%;background:#ff6d00"></i><i style="width:9.2%;background:#b0bec5"></i><i style="width:82.2%;background:#80e888"></i><i style="width:6.8%;background:#00a82d"></i></span><span class="ab" style="left:997.8px"><i style="width:43%"></i><b>43%</b></span><svg class="abs sp" style="left:1180px;top:0;width:155px;height:38px" viewBox="0 0 155 38"><path d="M5.9 24.3L11.9 24.3L17.9 24.3L23.9 24.3L29.9 24.3L35.9 24.3L41.9 24.3L47.9 24.3L53.9 24.3L59.9 24.3L65.9 24.3L71.9 24.3L77.9 24.3L83.9 24.3C86.62 23.14 87.24 20.79 89.9 19.2C92.04 17.91 93.5 17.94 95.9 17.1C98.3 16.26 99.79 14.42 101.9 15C104.59 15.74 105.26 18.61 107.9 20.4C110.06 21.85 111.74 23.58 113.9 23.1C116.54 22.5 117.21 18.44 119.9 17.7C122.01 17.12 123.73 20.29 125.9 19.8C128.53 19.21 129.93 14.26 131.9 15C134.73 16.06 134.79 21.89 137.9 24.3L143.9 24.3L143.9 24.3L5.9 24.3Z" fill="#d3e6ef" stroke="none"/><path d="M5.9 24.3L11.9 24.3L17.9 24.3L23.9 24.3L29.9 24.3L35.9 24.3L41.9 24.3L47.9 24.3L53.9 24.3L59.9 24.3L65.9 24.3L71.9 24.3L77.9 24.3L83.9 24.3C86.62 23.14 87.24 20.79 89.9 19.2C92.04 17.91 93.5 17.94 95.9 17.1C98.3 16.26 99.79 14.42 101.9 15C104.59 15.74 105.26 18.61 107.9 20.4C110.06 21.85 111.74 23.58 113.9 23.1C116.54 22.5 117.21 18.44 119.9 17.7C122.01 17.12 123.73 20.29 125.9 19.8C128.53 19.21 129.93 14.26 131.9 15C134.73 16.06 134.79 21.89 137.9 24.3L143.9 24.3" fill="none" stroke="#0ca8f3" stroke-width="1.150"/><g fill="#03a9f4"><circle cx="5.9" cy="24.3" r="1.250"/><circle cx="11.9" cy="24.3" r="1.250"/><circle cx="17.9" cy="24.3" r="1.250"/><circle cx="23.9" cy="24.3" r="1.250"/><circle cx="29.9" cy="24.3" r="1.250"/><circle cx="35.9" cy="24.3" r="1.250"/><circle cx="41.9" cy="24.3" r="1.250"/><circle cx="47.9" cy="24.3" r="1.250"/><circle cx="53.9" cy="24.3" r="1.250"/><circle cx="59.9" cy="24.3" r="1.250"/><circle cx="65.9" cy="24.3" r="1.250"/><circle cx="71.9" cy="24.3" r="1.250"/><circle cx="77.9" cy="24.3" r="1.250"/><circle cx="83.9" cy="24.3" r="1.250"/><circle cx="89.9" cy="19.2" r="1.250"/><circle cx="95.9" cy="17.1" r="1.250"/><circle cx="101.9" cy="15" r="1.250"/><circle cx="107.9" cy="20.4" r="1.250"/><circle cx="113.9" cy="23.1" r="1.250"/><circle cx="119.9" cy="17.7" r="1.250"/><circle cx="125.9" cy="19.8" r="1.250"/><circle cx="131.9" cy="15" r="1.250"/><circle cx="137.9" cy="24.3" r="1.250"/><circle cx="143.9" cy="24.3" r="1.250"/></g></svg><span id="t5_7" class="td" style="left:1340px">03:13:44</span><span id="t5_8" class="td" style="left:1450px">02:52:29</span></div>
<div class="tr" style="top:690px"><span id="t6_0" class="td" style="left:10px">6</span><svg class="abs" style="left:50.2px;top:7px;width:24px;height:24px" viewBox="0 0 24 24"><path fill="#b9b9b9" d="M17 10.500V7c0-.55-.45-1-1-1H4c-.55 0-1 .45-1 1v10c0 .55.45 1 1 1h12c.55 0 1-.45 1-1v-3.500l4 4v-11l-4 4z"/></svg><span id="t6_1" class="td lk" style="left:85px">10/09/2025</span><span id="t6_2" class="td" style="left:225px">01:51:25 PM</span><span id="t6_3" class="td" style="left:335px">10:45:57 PM</span><span id="t6_4" class="td lk" style="left:445px">Reginald Blick</span><span id="t6_5" class="td" style="left:605px">COMPUTER-121</span><span id="t6_6" class="td hi" style="left:765px">98</span><span class="pb" style="left:815px"><i style="width:3.3%;background:#b0bec5"></i><i style="width:0.8%;background:#80e888"></i><i style="width:95.4%;background:#00a82d"></i></span><span class="ab" style="left:997.8px"><i style="width:8%"></i><b>8%</b></span><svg class="abs sp" style="left:1180px;top:0;width:155px;height:38px" viewBox="0 0 155 38"><path d="M5.9 24.3L11.9 24.3L17.9 24.3L23.9 24.3L29.9 24.3L35.9 24.3L41.9 24.3L47.9 24.3L53.9 24.3L59.9 24.3L65.9 24.3L71.9 24.3L77.9 24.3C80.35 23.93 81.8 23.76 83.9 22.5C86.6 20.88 87.36 17.42 89.9 17.1C92.16 16.82 93.31 19.9 95.9 21C98.11 21.94 99.48 21.9 101.9 22.2C104.28 22.5 105.55 22.09 107.9 22.5C110.35 22.93 111.92 24.3 113.9 24.3C116.72 23.17 117.18 18.45 119.9 17.7C121.98 17.13 123.34 20.36 125.9 21C128.14 21.56 129.51 20.58 131.9 20.7C134.31 20.82 135.6 20.91 137.9 21.6C140.4 22.35 141.5 23.22 143.9 24.3L143.9 24.3L5.9 24.3Z" fill="#d3e6ef" stroke="none"/><path d="M5.9 24.3L11.9 24.3L17.9 24.3L23.9 24.3L29.9 24.3L35.9 24.3L41.9 24.3L47.9 24.3L53.9 24.3L59.9 24.3L65.9 24.3L71.9 24.3L77.9 24.3C80.35 23.93 81.8 23.76 83.9 22.5C86.6 20.88 87.36 17.42 89.9 17.1C92.16 16.82 93.31 19.9 95.9 21C98.11 21.94 99.48 21.9 101.9 22.2C104.28 22.5 105.55 22.09 107.9 22.5C110.35 22.93 111.92 24.3 113.9 24.3C116.72 23.17 117.18 18.45 119.9 17.7C121.98 17.13 123.34 20.36 125.9 21C128.14 21.56 129.51 20.58 131.9 20.7C134.31 20.82 135.6 20.91 137.9 21.6C140.4 22.35 141.5 23.22 143.9 24.3" fill="none" stroke="#0ca8f3" stroke-width="1.150"/><g fill="#03a9f4"><circle cx="5.9" cy="24.3" r="1.250"/><circle cx="11.9" cy="24.3" r="1.250"/><circle cx="17.9" cy="24.3" r="1.250"/><circle cx="23.9" cy="24.3" r="1.250"/><circle cx="29.9" cy="24.3" r="1.250"/><circle cx="35.9" cy="24.3" r="1.250"/><circle cx="41.9" cy="24.3" r="1.250"/><circle cx="47.9" cy="24.3" r="1.250"/><circle cx="53.9" cy="24.3" r="1.250"/><circle cx="59.9" cy="24.3" r="1.250"/><circle cx="65.9" cy="24.3" r="1.250"/><circle cx="71.9" cy="24.3" r="1.250"/><circle cx="77.9" cy="24.3" r="1.250"/><circle cx="83.9" cy="22.5" r="1.250"/><circle cx="89.9" cy="17.1" r="1.250"/><circle cx="95.9" cy="21" r="1.250"/><circle cx="101.9" cy="22.2" r="1.250"/><circle cx="107.9" cy="22.5" r="1.250"/><circle cx="113.9" cy="24.3" r="1.250"/><circle cx="119.9" cy="17.7" r="1.250"/><circle cx="125.9" cy="21" r="1.250"/><circle cx="131.9" cy="20.7" r="1.250"/><circle cx="137.9" cy="21.6" r="1.250"/><circle cx="143.9" cy="24.3" r="1.250"/></g></svg><span id="t6_7" class="td" style="left:1340px">02:00:49</span><span id="t6_8" class="td" style="left:1450px">01:56:36</span></div>
<div class="tr odd" style="top:728px"><span id="t7_0" class="td" style="left:10px">7</span><svg class="abs" style="left:50.2px;top:7px;width:24px;height:24px" viewBox="0 0 24 24"><path fill="#b9b9b9" d="M17 10.500V7c0-.55-.45-1-1-1H4c-.55 0-1 .45-1 1v10c0 .55.45 1 1 1h12c.55 0 1-.45 1-1v-3.500l4 4v-11l-4 4z"/></svg><span id="t7_1" class="td lk" style="left:85px">10/09/2025</span><span id="t7_2" class="td" style="left:225px">01:33:54 PM</span><span id="t7_3" class="td" style="left:335px">10:31:07 PM</span><span id="t7_4" class="td lk" style="left:445px">Ervin Treutel</span><span id="t7_5" class="td" style="left:605px">COMPUTER-100</span><span id="t7_6" class="td hi" style="left:765px">88</span><span class="pb" style="left:815px"><i style="width:12.3%;background:#b0bec5"></i><i style="width:16.6%;background:#80e888"></i><i style="width:71.1%;background:#00a82d"></i></span><span class="ab" style="left:997.8px"><i style="width:23%"></i><b>23%</b></span><svg class="abs sp" style="left:1180px;top:0;width:155px;height:38px" viewBox="0 0 155 38"><path d="M5.9 24.3L11.9 24.3L17.9 24.3L23.9 24.3L29.9 24.3L35.9 24.3L41.9 24.3L47.9 24.3L53.9 24.3L59.9 24.3L65.9 24.3L71.9 24.3L77.9 24.3C80.52 23.43 81.98 22.38 83.9 20.3C86.78 17.18 86.82 13.48 89.9 11.3C91.62 10.08 93.96 10.67 95.9 11.8C98.76 13.47 99.4 18.09 101.9 18.3C104.2 18.49 105.31 13.23 107.9 12.8C110.11 12.43 111.46 14.98 113.9 16.3C116.26 17.58 117.38 18.88 119.9 19.3C122.18 19.68 123.99 19.57 125.9 18.3C128.79 16.37 129.69 10.93 131.9 11.3C134.49 11.73 135.02 17.18 137.9 20.3C139.82 22.38 141.5 22.7 143.9 24.3L143.9 24.3L5.9 24.3Z" fill="#d3e6ef" stroke="none"/><path d="M5.9 24.3L11.9 24.3L17.9 24.3L23.9 24.3L29.9 24.3L35.9 24.3L41.9 24.3L47.9 24.3L53.9 24.3L59.9 24.3L65.9 24.3L71.9 24.3L77.9 24.3C80.52 23.43 81.98 22.38 83.9 20.3C86.78 17.18 86.82 13.48 89.9 11.3C91.62 10.08 93.96 10.67 95.9 11.8C98.76 13.47 99.4 18.09 101.9 18.3C104.2 18.49 105.31 13.23 107.9 12.8C110.11 12.43 111.46 14.98 113.9 16.3C116.26 17.58 117.38 18.88 119.9 19.3C122.18 19.68 123.99 19.57 125.9 18.3C128.79 16.37 129.69 10.93 131.9 11.3C134.49 11.73 135.02 17.18 137.9 20.3C139.82 22.38 141.5 22.7 143.9 24.3" fill="none" stroke="#0ca8f3" stroke-width="1.150"/><g fill="#03a9f4"><circle cx="5.9" cy="24.3" r="1.250"/><circle cx="11.9" cy="24.3" r="1.250"/><circle cx="17.9" cy="24.3" r="1.250"/><circle cx="23.9" cy="24.3" r="1.250"/><circle cx="29.9" cy="24.3" r="1.250"/><circle cx="35.9" cy="24.3" r="1.250"/><circle cx="41.9" cy="24.3" r="1.250"/><circle cx="47.9" cy="24.3" r="1.250"/><circle cx="53.9" cy="24.3" r="1.250"/><circle cx="59.9" cy="24.3" r="1.250"/><circle cx="65.9" cy="24.3" r="1.250"/><circle cx="71.9" cy="24.3" r="1.250"/><circle cx="77.9" cy="24.3" r="1.250"/><circle cx="83.9" cy="20.3" r="1.250"/><circle cx="89.9" cy="11.3" r="1.250"/><circle cx="95.9" cy="11.8" r="1.250"/><circle cx="101.9" cy="18.3" r="1.250"/><circle cx="107.9" cy="12.8" r="1.250"/><circle cx="113.9" cy="16.3" r="1.250"/><circle cx="119.9" cy="19.3" r="1.250"/><circle cx="125.9" cy="18.3" r="1.250"/><circle cx="131.9" cy="11.3" r="1.250"/><circle cx="137.9" cy="20.3" r="1.250"/><circle cx="143.9" cy="24.3" r="1.250"/></g></svg><span id="t7_7" class="td" style="left:1340px">05:05:40</span><span id="t7_8" class="td" style="left:1450px">04:47:10</span></div>
<div class="abs" style="left:60px;top:504px;width:34px;height:219px;border:3px solid #f00;border-radius:3.500px"></div>
</div>
<div class="abs" style="left:1835.500px;top:878px;width:53px;height:53px;border-radius:50%;background:#03a9f4;z-index:20"><svg class="abs" style="left:16.600px;top:17px;width:21px;height:21px" viewBox="0 0 24 24"><path fill="#fff" d="M20 2H4c-1.100 0-1.990.9-1.990 2L2 22l4-4h14c1.100 0 2-.9 2-2V4c0-1.100-.9-2-2-2zM6 9h12v2H6V9zm8 5H6v-2h8v2zm4-6H6V6h12v2z"/></svg></div>
</body>
</html>
